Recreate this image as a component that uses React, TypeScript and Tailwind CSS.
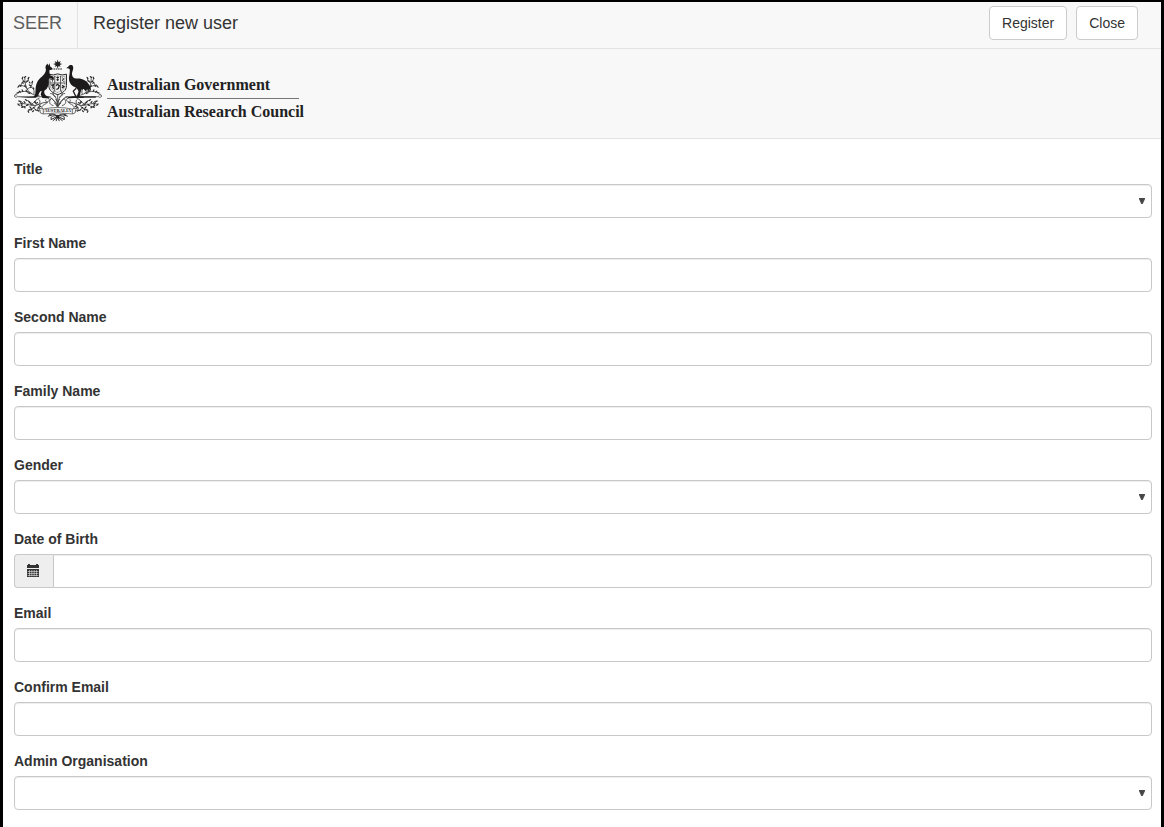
import type { ReactNode } from "react";

const control =
  "block h-[34px] w-full min-w-0 border border-[#c8c8c8] bg-white px-3 text-sm text-[#555555] shadow-[inset_0_1px_1px_rgba(0,0,0,0.075)] outline-none focus:border-[#66afe9]";

function Field({ id, label, children }: { id: string; label: string; children: ReactNode }) {
  return (
    <div className="mb-[15px]">
      <label htmlFor={id} className="mb-[5px] block text-sm leading-5 font-bold text-[#333333]">
        {label}
      </label>
      {children}
    </div>
  );
}

function TextField({ id, label, type = "text" }: { id: string; label: string; type?: string }) {
  return (
    <Field id={id} label={label}>
      <input id={id} type={type} className={`${control} rounded-[4px]`} />
    </Field>
  );
}

function SelectField({ id, label }: { id: string; label: string }) {
  return (
    <Field id={id} label={label}>
      <div className="relative">
        <select id={id} className={`${control} appearance-none rounded-[4px]`} defaultValue="">
          <option value="" />
        </select>
        <svg viewBox="0 0 6 6" className="pointer-events-none absolute top-[14px] right-[7px] size-[6px]" aria-hidden="true">
          <path d="M0 0H6V1L3.7 6H2.3L0 1Z" fill="#484848" />
        </svg>
      </div>
    </Field>
  );
}

function CalendarIcon() {
  return (
    <svg viewBox="0 0 14 14" className="size-[14px]" aria-hidden="true">
      <path d="M1 1H2V0H4V1H10V0H12V1H13V4H1Z" fill="#333" />
      <path d="M1 5H13V13H1Z" fill="#333" />
      <path
        d="M3.5 6V12.4M5.8 6V12.4M8.2 6V12.4M10.5 6V12.4M1.6 7.5H12.4M1.6 9.5H12.4M1.6 11.5H12.4"
        stroke="#e4e4e4"
        strokeWidth="0.6"
      />
    </svg>
  );
}

function Foliage() {
  return (
    <g fill="none" stroke="#2a2a2a" strokeWidth="2.3" strokeLinecap="round">
      {/* upper branch */}
      <path d="M92 126C76 127 62 119 56 108S48 82 48 72M57 108C51 97 40 94 31 97M68 119C58 112 38 112 28 118M58 105C66 101 72 95 71 87M50 88C58 84 61 79 59 73M49 84C42 82 40 77 41 72M76 121C78 112 76 108 72 104M39 96C36 91 38 88 41 86" />
      <g strokeWidth="3.6">
        <path d="M47 71L51 68M40 74L42 70M58 75L61 71M54 83L58 81M43 82L46 85M40 86L43 89M33 94L36 98M27 101L30 97M48 95L51 99M62 94L66 96M70 87L72 83M66 102L70 100M31 113L35 116M40 109L42 114M52 110L55 115M24 119L29 117M58 118L63 120M74 103L76 106M62 85L64 88" />
      </g>
      {/* scroll under the supporters */}
      <path d="M16 127C16 133 22 133 25 130H126M18 126C17 121 24 121 24 125M92 135C78 140 74 149 84 153S98 143 92 139M106 133C122 132 128 139 121 144S109 143 113 139M130 134C134 142 142 144 147 152" />
      {/* lower branch */}
      <path d="M118 148C102 144 91 158 74 157S44 146 28 154M76 156C66 148 60 142 52 140M58 152C54 158 48 163 40 163M82 157C76 166 68 171 61 171M43 150C40 145 36 143 31 144M98 151C90 158 90 166 98 168M70 155C72 148 78 146 82 143M114 151C100 156 96 165 104 168" />
      <g strokeWidth="3.6">
        <path d="M27 152L31 157M36 148L39 153M30 143L34 145M46 145L49 149M50 139L54 142M60 144L63 148M65 151L68 154M54 157L58 155M46 160L49 164M39 163L42 160M37 158L40 155M64 161L67 165M60 171L64 169M68 171L70 167M74 163L78 165M58 174L60 178M72 176L75 173M84 150L87 148M78 145L81 148M88 165L91 162M93 158L97 160M86 171L90 174M80 169L83 172" />
      </g>
    </g>
  );
}

function Crest() {
  return (
    <svg viewBox="15 15 270 195" className="h-[64px] w-[88px] shrink-0" role="img" aria-label="Commonwealth Coat of Arms">
      <Foliage />
      <g transform="translate(300 0) scale(-1 1)">
        <Foliage />
      </g>

      {/* star and wreath */}
      <path
        d="M149 16L151.6 24L158.5 20.5L155.4 27.7L163 30L155.4 32.6L158 39L151.6 36L149 44L146.4 36L140 39L142.6 32.6L135 30L142.6 27.7L139.5 20.5L146.4 24Z"
        fill="#222"
      />
      <path d="M136 45H162" stroke="#222" strokeWidth="3.5" strokeDasharray="5 2" />

      {/* shield */}
      <path d="M122 61Q135 66 149 60Q163 66 176 61V96C176 112 164 118 149 124C134 118 122 112 122 96Z" fill="#f2f2f2" stroke="#222" strokeWidth="3" />
      <path d="M127 67Q138 70 149 66Q160 70 171 67V96C171 107 161 112 149 117C137 112 127 107 127 96Z" fill="none" stroke="#444" strokeWidth="2" strokeDasharray="3 2" />
      <path d="M140 66V112M158 66V112M125 88H173" stroke="#333" strokeWidth="2.4" />
      <path d="M133 70V84M128 77H138" stroke="#444" strokeWidth="3" />
      <path d="M145 71H153M149 68V82M145 78H153M163 72L168 76L163 79L168 84" fill="none" stroke="#222" strokeWidth="3" />
      <path d="M129 95L136 93L134 101L137 106M144 96L149 92L154 96L151 105L145 108M163 95L168 99L162 103" fill="none" stroke="#222" strokeWidth="4" />

      {/* kangaroo */}
      <path
        d="M114 33L118 28L120 35L124 27L126 37C129 39 134 42 134 45C133 48 128 48 124 48C123 54 124 60 127 65L134 68L139 73L135 76L124 73L121 78C123 88 121 98 115 106L108 112C107 119 109 124 114 127L122 131V134H102L97 123L100 112L95 114L88 128L82 133H31L76 129C83 123 80 110 82 99C84 86 91 75 101 68C109 62 113 54 113 46C111 42 111 37 114 33Z"
        fill="#1c1a1b"
      />

      {/* emu */}
      <path
        d="M175 43L182 37C186 31 194 31 196 37C199 46 192 53 193 62C194 72 200 75 209 74C224 73 239 81 244 91C249 98 252 105 251 111L244 106L246 116L239 107L236 115L229 106L222 108L219 118L216 129L229 131V134H181V131L208 129L213 113L209 106L203 101C193 98 186 90 184 80C182 69 188 56 186 46L181 43Z"
        fill="#1c1a1b"
      />
      <path d="M206 104L197 113L205 130" fill="none" stroke="#1c1a1b" strokeWidth="4" />
      <path d="M192 131H266" stroke="#222" strokeWidth="4" />

      {/* central stems */}
      <g fill="none" stroke="#333" strokeWidth="2.4">
        <path d="M126 120C140 121 147 133 148 158M172 120C158 121 151 133 150 158M118 131C134 134 143 146 147 161M180 131C164 134 155 146 151 161M149 122V162M139 111C132 122 134 128 143 131M159 111C166 122 164 128 155 131M128 137C120 147 126 156 136 157M170 137C178 147 172 156 162 157" />
        <path d="M142 137L149 145L156 137M138 149L149 158L160 149" />
      </g>

      {/* ribbon */}
      <path d="M93 165L105 168Q149 158 194 168L206 165L202 180L194 183Q149 176 105 183L96 180Z" fill="#f5f5f5" stroke="#333" strokeWidth="2" />
      <path d="M105 168V183M194 168V183M93 165C86 166 88 175 96 173M206 165C213 166 211 175 203 173" fill="none" stroke="#333" strokeWidth="2" />
      <text x="149" y="178" textAnchor="middle" fontSize="14" fontWeight="700" fontFamily="Liberation Serif, serif" fill="#222">
        AUSTRALIA
      </text>

      {/* lower knot */}
      <path
        d="M122 186C133 181 145 185 149 191C153 185 165 181 176 186M130 190L149 187L169 190M129 200L149 190L169 200M134 204L149 192L164 204M144 205L149 192L154 205M119 190L132 186M180 190L167 186M129 192V201M169 192V201"
        fill="none"
        stroke="#2a2a2a"
        strokeWidth="3"
      />
      <circle cx="149" cy="192" r="5" fill="#222" />
    </svg>
  );
}

const actionButton =
  "h-[34px] cursor-pointer rounded-[4px] border border-[#cccccc] bg-white px-3 text-sm leading-5 text-[#333333] hover:bg-[#e6e6e6]";

export default function App() {
  return (
    <div className="min-h-screen border-x-[3px] border-t-2 border-black bg-white font-['Liberation_Sans',Arial,sans-serif] text-[#333333]">
      <header className="flex h-[47px] items-stretch border-b border-[#e2e2e2] bg-[#f8f8f8]">
        <a href="#" className="flex items-center border-r border-[#e2e2e2] pr-[15px] pb-1 pl-[10px] text-lg text-[#5e5e5e]">
          SEER
        </a>
        <h1 className="flex flex-1 items-center pb-1 pl-[15px] text-lg text-[#333333]">Register new user</h1>
        <div className="flex items-start gap-[9px] pt-1 pr-[23px]">
          <button type="submit" form="registration" className={actionButton}>
            Register
          </button>
          <button type="button" className={actionButton}>
            Close
          </button>
        </div>
      </header>

      <div className="flex h-[90px] items-start border-b border-[#e2e2e2] bg-[#f8f8f8] pt-[10px] pl-[11px]">
        <Crest />
        <div className="ml-[5px] w-[192px] pt-[13px] font-['Liberation_Serif',serif] text-base leading-[26px] font-bold whitespace-nowrap text-[#222222]">
          <p className="border-b border-[#777777]">Australian Government</p>
          <p>Australian Research Council</p>
        </div>
      </div>

      <form id="registration" className="pt-5 pr-[9px] pl-[11px]" onSubmit={(event) => event.preventDefault()}>
        <SelectField id="title" label="Title" />
        <TextField id="first-name" label="First Name" />
        <TextField id="second-name" label="Second Name" />
        <TextField id="family-name" label="Family Name" />
        <SelectField id="gender" label="Gender" />
        <Field id="birth-date" label="Date of Birth">
          <div className="flex">
            <span className="flex w-[39px] shrink-0 items-center justify-center rounded-l-[4px] border border-r-0 border-[#c8c8c8] bg-[#eeeeee] pr-0.5">
              <CalendarIcon />
            </span>
            <input id="birth-date" type="text" className={`${control} rounded-r-[4px]`} />
          </div>
        </Field>
        <TextField id="email" label="Email" type="email" />
        <TextField id="confirm-email" label="Confirm Email" type="email" />
        <SelectField id="organisation" label="Admin Organisation" />
      </form>
    </div>
  );
}
